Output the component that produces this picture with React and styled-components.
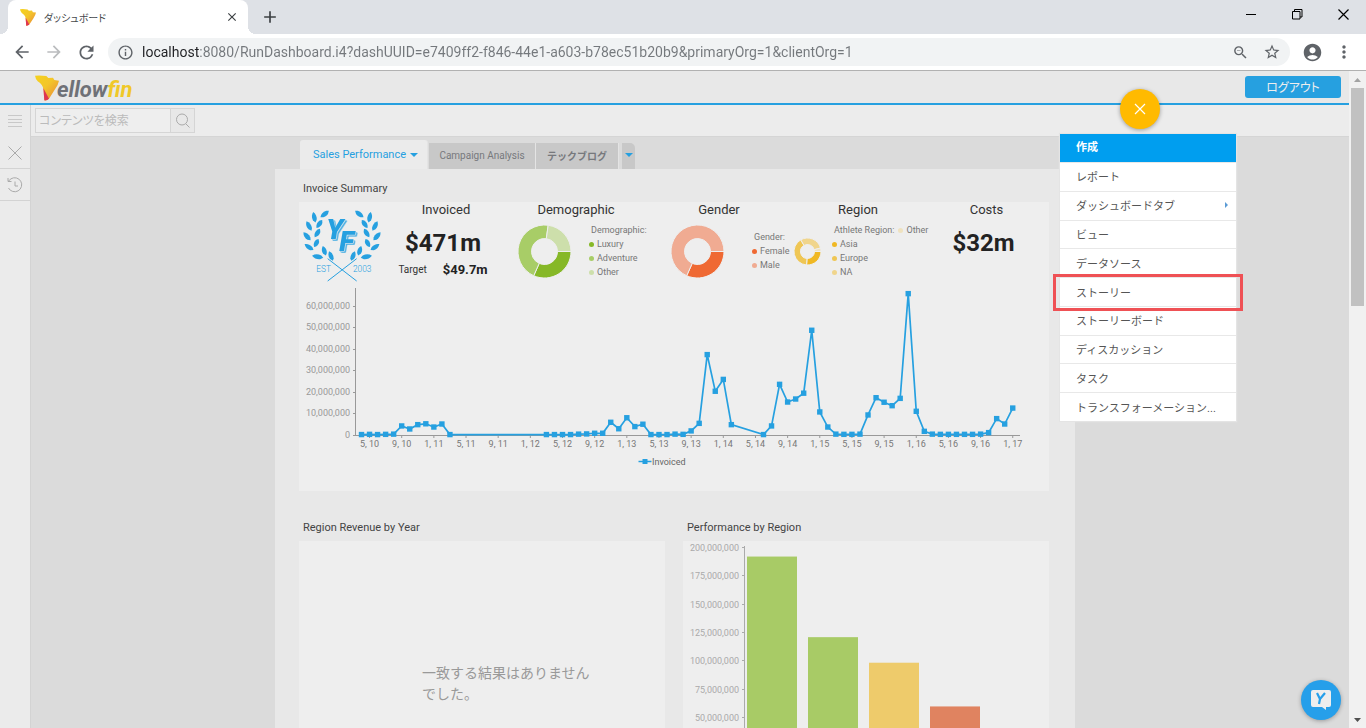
import React from "react";
import styled, { createGlobalStyle, css } from "styled-components";
import {
  MdArrowBack,
  MdArrowForward,
  MdRefresh,
  MdInfoOutline,
  MdZoomOut,
  MdStarBorder,
  MdAccountCircle,
  MdMoreVert,
  MdClose,
  MdAdd,
} from "react-icons/md";

const ui = '"Roboto", "Noto Sans CJK JP", sans-serif';
const blue = "#26a0e0";

const GlobalStyle = createGlobalStyle`
  * { box-sizing: border-box; }
  body { margin: 0; font-family: ${ui}; color: #444; overflow: hidden; }
  button { border: 0; padding: 0; background: none; font-family: inherit; color: inherit; cursor: pointer; }
  svg { display: block; flex: none; }
  ul { list-style: none; margin: 0; padding: 0; }
`;

/* ---------- browser frame ---------- */

const Browser = styled.div`
  display: flex;
  flex-direction: column;
  height: 100vh;
`;

const TabStrip = styled.div`
  display: flex;
  flex: none;
  height: 34px;
  padding-left: 8px;
  background: #dee1e6;
`;

const BrowserTab = styled.div`
  position: relative;
  display: flex;
  align-items: center;
  width: 240px;
  padding: 0 9px 0 12px;
  background: #fff;
  border-radius: 8px 8px 0 0;
  font-size: 10px;
  font-feature-settings: "palt";
  color: #45484c;

  &::before,
  &::after {
    content: "";
    position: absolute;
    bottom: 0;
    width: 8px;
    height: 8px;
  }
  &::before {
    left: -8px;
    background: radial-gradient(circle at 0 0, transparent 8px, #fff 8px);
  }
  &::after {
    right: -8px;
    background: radial-gradient(circle at 100% 0, transparent 8px, #fff 8px);
  }
`;

const TabTitle = styled.span`
  flex: 1;
  padding-left: 8px;
`;

const IconButton = styled.button`
  display: grid;
  place-items: center;
  flex: none;
  width: ${(p) => p.$w || 32}px;
  color: ${(p) => p.$color || "#5f6368"};
`;

const WindowControls = styled.div`
  display: flex;
  margin-left: auto;
  height: 28px;
`;

const AddressRow = styled.div`
  display: flex;
  align-items: center;
  flex: none;
  height: 37px;
  padding: 0 6px;
  background: #fff;
  border-bottom: 1px solid #b1b1b1;
`;

const AddressBar = styled.label`
  display: flex;
  align-items: center;
  flex: 1;
  height: 28px;
  margin: 0 6px;
  padding: 0 2px 0 9px;
  border-radius: 14px;
  background: #f1f3f4;
  color: #5f6368;
`;

const UrlInput = styled.input`
  flex: 1;
  min-width: 0;
  margin-left: 8px;
  padding: 0;
  border: 0;
  outline: 0;
  font: 14px/20px Roboto, sans-serif;
  color: transparent;
  background: linear-gradient(90deg, #202124 58px, #74787c 58px);
  background-clip: text;
  -webkit-background-clip: text;
`;

const Viewport = styled.div`
  display: flex;
  flex: 1;
  min-height: 0;
`;

const Scrollbar = styled.div`
  display: flex;
  flex-direction: column;
  align-items: center;
  flex: none;
  width: 17px;
  background: #f1f1f1;
`;

const ScrollArrow = styled(IconButton)`
  width: 17px;
  height: 17px;
`;

const ScrollThumb = styled.div`
  width: 13px;
  height: 33.2%;
  margin-bottom: auto;
  background: #c1c1c1;
`;

/* ---------- application ---------- */

const Page = styled.div`
  position: relative;
  display: flex;
  flex-direction: column;
  flex: 1;
  min-width: 0;
  overflow: hidden;
  background: #dbdbdb;
`;

const Header = styled.header`
  display: flex;
  align-items: center;
  justify-content: space-between;
  flex: none;
  height: 34px;
  padding: 0 8px 0 35px;
  background: #e8e8e8;
  border-bottom: 2px solid ${blue};
`;

const Brand = styled.a`
  display: flex;
  align-items: center;
  padding-top: 2px;
  font: italic 700 22px/26px Roboto, sans-serif;
  color: #6f7177;
  text-decoration: none;
`;

const BrandName = styled.span`
  margin-left: -2px;
  padding-top: 4px;
`;

const BrandFin = styled.span`
  color: #f0c828;
`;

const Logout = styled.button`
  width: 96px;
  height: 22px;
  padding-bottom: 2px;
  border-radius: 3px;
  background: ${blue};
  color: #eee;
  font-size: 12px;
  font-feature-settings: "palt";
`;

const Workspace = styled.div`
  display: flex;
  flex: 1;
  min-height: 0;
`;

const SideBar = styled.nav`
  display: flex;
  flex-direction: column;
  flex: none;
  width: 31px;
  background: #ebebeb;
  border-right: 1px solid #d3d3d3;
`;

const SideButton = styled.button`
  display: grid;
  place-items: center;
  height: 32px;
  border-bottom: 1px solid ${(p) => (p.$line ? "#d3d3d3" : "transparent")};
  color: #aaa;
`;

const Content = styled.div`
  flex: 1;
  min-width: 0;
`;

const SearchRow = styled.form`
  display: flex;
  height: 32px;
  padding: 3px 4px;
  background: #ececec;
  border-bottom: 1px solid #d5d5d5;
`;

const SearchInput = styled.input`
  width: 136px;
  height: 25px;
  padding: 0 3px;
  border: 1px solid #d5d5d5;
  background: #eee;
  font: 12px ${ui};
  font-feature-settings: "palt";
  outline: 0;
  &::placeholder {
    color: #bbb;
  }
`;

const SearchButton = styled.button`
  display: grid;
  place-items: center;
  width: 24px;
  height: 25px;
  border: 1px solid #d5d5d5;
  border-left: 0;
  background: #e8e8e8;
  color: #aaa;
`;

const Canvas = styled.main`
  padding: 2px 30px 0 0;
`;

const Dashboard = styled.div`
  max-width: 800px;
  margin: 0 auto;
`;

const DashTabs = styled.div`
  display: flex;
  align-items: flex-end;
  height: 30px;
  padding-left: 25px;
`;

const DashTab = styled.button`
  display: flex;
  align-items: center;
  justify-content: center;
  gap: 4px;
  width: ${(p) => p.$w}px;
  height: 26px;
  padding-bottom: 2px;
  background: #c8c8c8;
  border-right: 1px solid #e4e4e4;
  color: #77797d;
  font-size: 10px;
  font-weight: ${(p) => (p.$bold ? 700 : 400)};
  ${(p) =>
    p.$active &&
    css`
      height: 29px;
      margin-right: 1px;
      padding: 0 0 0 4px;
      background: #ebebeb;
      border-radius: 3px 3px 0 0;
      color: ${blue};
      font-size: 11px;
    `}
  ${(p) =>
    p.$more &&
    css`
      margin-left: 3px;
      border-right: 0;
      border-radius: 0 5px 0 0;
    `}
`;

const DashBody = styled.div`
  display: grid;
  grid-template-columns: 1fr 1fr;
  column-gap: 18px;
  row-gap: 23px;
  padding: 6px 26px 0 24px;
  background: #e8e8e8;
`;

const Report = styled.section`
  grid-column: ${(p) => (p.$wide ? "1 / -1" : "auto")};
  min-width: 0;
`;

const ReportTitle = styled.h2`
  margin: 0;
  padding: 0 4px;
  font-size: 11px;
  font-weight: 400;
  line-height: 27px;
  color: #444;
`;

const Panel = styled.div`
  min-height: ${(p) => p.$h}px;
  background: #eee;
`;

const KpiRow = styled.div`
  display: grid;
  grid-template-columns: 87fr 120fr 140fr 146fr 132fr 125fr;
  height: 80px;
`;

const Kpi = styled.div`
  min-width: 0;
  text-align: center;
`;

const LaurelBox = styled.div`
  padding: 5px 0 0 1px;
`;

const KpiTitle = styled.h3`
  margin: 0;
  font-size: 13px;
  font-weight: 400;
  line-height: 16px;
  color: #333;
`;

const BigValue = styled.div`
  padding: 8px 6px 0 0;
  font-size: 24px;
  font-weight: 700;
  line-height: 34px;
  color: #222;
`;

const TargetRow = styled.div`
  display: flex;
  justify-content: center;
  align-items: center;
  gap: 16px;
  padding-right: 6px;
  line-height: 20px;
  font-size: 10px;
  color: #333;
`;

const TargetValue = styled.strong`
  font-size: 13px;
  color: #222;
`;

const DonutRow = styled.div`
  display: flex;
  align-items: center;
  gap: ${(p) => p.$gap}px;
  height: 60px;
  padding: 6px 0 0 ${(p) => p.$pad}px;
  text-align: left;
`;

const Legend = styled.ul`
  font-size: 9px;
  line-height: 14px;
  white-space: nowrap;
  color: #777;
`;

const LegendTitle = styled.li`
  padding-left: 2px;
`;

const LegendItem = styled.li`
  display: flex;
  align-items: center;
  gap: 3px;
  padding-left: ${(p) => (p.$title ? 2 : 0)}px;
`;

const Dot = styled.span`
  width: 5px;
  height: 5px;
  margin-left: ${(p) => p.$space || 0}px;
  border-radius: 50%;
  background: ${(p) => p.$c};
`;

const Chart = styled.svg`
  width: 100%;
  font-family: Roboto, sans-serif;
  font-size: 9px;
`;

const NoResult = styled.p`
  margin: 0;
  padding: 122px 66px 0 123px;
  font-size: 14px;
  line-height: 21px;
  color: #999;
`;

/* ---------- floating create menu ---------- */

const CreateOverlay = styled.div`
  position: absolute;
  top: 18px;
  right: 113px;
  width: 176px;
`;

const CloseCircle = styled.button`
  display: grid;
  place-items: center;
  width: 40px;
  height: 40px;
  margin: 0 auto 5px 60px;
  border-radius: 50%;
  background: #ffba00;
  color: #fff;
  box-shadow: 0 1px 4px rgba(0, 0, 0, 0.35);
`;

const Menu = styled.div`
  background: #fff;
  box-shadow: 0 0 1px 1px #e4e4e4;
  font-size: 11px;
`;

const MenuTitle = styled.div`
  padding-left: 16px;
  background: #009eef;
  color: #fff;
  font-weight: 700;
  line-height: 28px;
`;

const MenuList = styled.ul`
  display: flex;
  flex-direction: column;
  height: 259px;
`;

const MenuItem = styled.li`
  position: relative;
  display: flex;
  flex: 1;
  border-top: 1px solid #e8e8e8;
  ${(p) =>
    p.$marked &&
    css`
      &::after {
        content: "";
        position: absolute;
        inset: -4px -7px -5px;
        border: 3px solid #ef5155;
        pointer-events: none;
        z-index: 1;
      }
    `}
`;

const MenuButton = styled.button`
  display: flex;
  align-items: center;
  justify-content: space-between;
  width: 100%;
  padding: 0 8px 1px 16px;
  font-size: 11px;
  color: #555;
`;

const ChatButton = styled.button`
  position: absolute;
  right: 8px;
  bottom: 8px;
  display: grid;
  place-items: center;
  width: 40px;
  height: 40px;
  border-radius: 50%;
  background: #269fea;
  box-shadow: 0 1px 4px rgba(0, 0, 0, 0.3);
`;

/* ---------- drawings ---------- */

function Emblem({ width, height }) {
  return (
    <svg width={width} height={height} viewBox="0 0 72 76" aria-hidden="true">
      <defs>
        <linearGradient id="gold" x1="0" y1="0" x2="1" y2="1">
          <stop offset="0" stopColor="#f5d21e" />
          <stop offset="0.45" stopColor="#f3c52a" />
          <stop offset="1" stopColor="#e8833a" />
        </linearGradient>
      </defs>
      <path
        d="M0 1 Q14 -1 34 2 L40 8 L54 7 L58 14 L72 16 Q70 28 60 42 L42 70 Q36 76 28 75 L26 44 Q24 28 8 18 Q2 12 0 1Z"
        fill="url(#gold)"
      />
      <path d="M25 38 L42 70 Q36 76 28 75Z" fill="#df3550" />
    </svg>
  );
}

function Caret({ size = 8, color = blue }) {
  return (
    <svg width={size} height={size / 2} viewBox="0 0 8 4">
      <path d="M0 0h8L4 4z" fill={color} />
    </svg>
  );
}

const LEAVES = [
  [104, 236, -38, 16],
  [73, 246, 78, 16],
  [88, 266, -55, 15],
  [57, 272, 62, 16],
  [82, 293, -58, 15],
  [51, 303, 48, 16],
  [79, 323, -62, 14],
  [57, 335, 34, 16],
  [83, 364, 10, 17],
  [103, 346, 72, 15],
  [123, 362, 68, 15],
];

function LeafSide() {
  return LEAVES.map(([x, y, r, len]) => (
    <path
      key={`${x}-${y}`}
      transform={`translate(${x} ${y}) rotate(${r})`}
      d={`M${-len} 0 Q${-len / 3} -10 ${len * 0.6} -5 L${len} 0 L${len * 0.5} 6 Q${-len / 3} 10 ${-len} 0Z`}
    />
  ));
}

const Monogram = styled.g`
  font: italic 900 84px Roboto, sans-serif;
  fill: ${blue};

  text {
    filter: drop-shadow(2px 2px 0 #eee) drop-shadow(3px 3px 0 ${blue});
  }
`;

function Laurel() {
  return (
    <svg width="85" height="77" viewBox="30 215 255 231" role="img" aria-label="YF Est 2003">
      <g fill={blue}>
        <LeafSide />
        <g transform="translate(312 0) scale(-1 1)">
          <LeafSide />
        </g>
      </g>
      <path d="M113 370 L200 437 M200 370 L113 437" stroke={blue} strokeWidth="3" />
      <Monogram>
        <text x="109" y="311">Y</text>
        <text x="148" y="346">F</text>
      </Monogram>
      <g fontFamily="Roboto, sans-serif" fontWeight="300" fontSize="25" fill={blue}>
        <text x="79" y="410">EST</text>
        <text x="189" y="410">2003</text>
      </g>
    </svg>
  );
}

/* Slices are [start, end, colour] in degrees, clockwise from three o'clock. */
function Donut({ size, hole, slices }) {
  const r = size / 2;
  const at = (deg, rad) => {
    const a = (deg * Math.PI) / 180;
    return `${r + rad * Math.cos(a)} ${r + rad * Math.sin(a)}`;
  };
  return (
    <svg width={size} height={size}>
      {slices.map(([a, b, c]) => {
        const big = b - a > 180 ? 1 : 0;
        return (
          <path
            key={a}
            d={`M${at(a, r)} A${r} ${r} 0 ${big} 1 ${at(b, r)} L${at(b, hole)} A${hole} ${hole} 0 ${big} 0 ${at(a, hole)}Z`}
            fill={c}
            stroke="#eee"
            strokeWidth="1"
          />
        );
      })}
    </svg>
  );
}

/* [month index counted from April 2010, invoiced in millions] */
const INVOICED = [
  [0, 0.2], [1, 0.3], [2, 0.2], [3, 0.3], [4, 0.4], [5, 4.2], [6, 2.8], [7, 4.8], [8, 5.2],
  [9, 3.7], [10, 5.1], [11, 0.2], [23, 0.2], [24, 0.2], [25, 0.2], [26, 0.2], [27, 0.4],
  [28, 0.5], [29, 0.8], [30, 0.8], [31, 5.9], [32, 2.9], [33, 8], [34, 3.9], [35, 5],
  [36, 0.2], [37, 0.2], [38, 0.2], [39, 0.4], [40, 0.3], [41, 1.9], [42, 5.4], [43, 37.3],
  [44, 20.3], [45, 25.8], [46, 4.8], [50, 0.2], [51, 4.2], [52, 23.5], [53, 15.3], [54, 16.7],
  [55, 19.4], [56, 48.6], [57, 10.7], [58, 3.7], [59, 0.4], [60, 0.3], [61, 0.3], [62, 0.4],
  [63, 9.3], [64, 17.3], [65, 15.2], [66, 13.6], [67, 17], [68, 65.6], [69, 11], [70, 1.7],
  [71, 0.4], [72, 0.3], [73, 0.3], [74, 0.3], [75, 0.3], [76, 0.3], [77, 0.4], [78, 1.1],
  [79, 7.6], [80, 5.1], [81, 12.5],
];

const MONTHS = [
  "5, 10", "9, 10", "1, 11", "5, 11", "9, 11", "1, 12", "5, 12", "9, 12", "1, 13", "5, 13", "9, 13",
  "1, 14", "5, 14", "9, 14", "1, 15", "5, 15", "9, 15", "1, 16", "5, 16", "9, 16", "1, 17",
];

function LineChart() {
  const x = (i) => 62.5 + i * 8.04;
  const y = (v) => 153 - v * 2.155;
  return (
    <Chart viewBox="0 0 750 208">
      <path d="M56.5 6V153.5H721" fill="none" stroke="#999" />
      {[0, 10, 20, 30, 40, 50, 60].map((v) => (
        <g key={v}>
          <path d={`M54 ${Math.round(y(v)) + 0.5}h3`} stroke="#999" />
          <text x="51" y={y(v) + 3} textAnchor="end" fill="#999">
            {v ? `${v},000,000` : "0"}
          </text>
        </g>
      ))}
      {MONTHS.map((m, k) => (
        <g key={m}>
          <path d={`M${x(1 + k * 4)} 153v3`} stroke="#999" />
          <text x={x(1 + k * 4)} y="165" textAnchor="middle" fill="#777">
            {m}
          </text>
        </g>
      ))}
      <polyline
        points={INVOICED.map(([i, v]) => `${x(i)},${y(v)}`).join(" ")}
        fill="none"
        stroke={blue}
        strokeWidth="1.7"
      />
      {INVOICED.map(([i, v]) => (
        <rect key={i} x={x(i) - 2.7} y={y(v) - 2.7} width="5.4" height="5.4" fill={blue} />
      ))}
      <path d="M339.5 179.5h13" stroke={blue} strokeWidth="1.5" />
      <rect x="343.5" y="177" width="5" height="5" fill={blue} />
      <text x="353" y="183" fill="#666">
        Invoiced
      </text>
    </Chart>
  );
}

const BARS = [
  [191.5, "#a8cb66"],
  [120.5, "#a8cb66"],
  [98, "#eecb6b"],
  [59.5, "#e08360"],
];

function BarChart() {
  const y = (v) => 233 - v * 1.1355;
  return (
    <Chart viewBox="0 0 366 250">
      {[200, 175, 150, 125, 100, 75, 50].map((v) => (
        <g key={v}>
          <path d={`M59 ${Math.round(y(v)) + 0.5}h3`} stroke="#aaa" />
          <text x="56" y={y(v) + 4} textAnchor="end" fill="#aaa">
            {v},000,000
          </text>
        </g>
      ))}
      <path d="M61.5 5V234" stroke="#aaa" />
      {BARS.map(([v, c], k) => (
        <rect key={v} x={64 + k * 61} y={y(v)} width="50" height={v * 1.1355} fill={c} />
      ))}
    </Chart>
  );
}

const MENU = [
  "レポート",
  "ダッシュボードタブ",
  "ビュー",
  "データソース",
  "ストーリー",
  "ストーリーボード",
  "ディスカッション",
  "タスク",
  "トランスフォーメーション...",
];

export default function App() {
  return (
    <Browser>
      <GlobalStyle />
      <TabStrip>
        <BrowserTab>
          <Emblem width={16} height={17} />
          <TabTitle>ダッシュボード</TabTitle>
          <IconButton $w={14} $color="#3c4043" aria-label="Close tab">
            <MdClose size={14} />
          </IconButton>
        </BrowserTab>
        <IconButton $w={44} $color="#3c4043" aria-label="New tab">
          <MdAdd size={20} />
        </IconButton>
        <WindowControls>
          <IconButton $w={46} $color="#000" aria-label="Minimize">
            <svg width="10" height="10"><path d="M0 5.5h10" stroke="currentColor" /></svg>
          </IconButton>
          <IconButton $w={46} $color="#000" aria-label="Restore">
            <svg width="11" height="11" fill="none" stroke="currentColor">
              <path d="M.5 2.5h7.5v7.5H.5z M2.5 2.5V.5H10V8H8" />
            </svg>
          </IconButton>
          <IconButton $w={46} $color="#000" aria-label="Close window">
            <svg width="11" height="11"><path d="M.5 .5l10 10M10.5 .5l-10 10" stroke="currentColor" strokeWidth="1.2" /></svg>
          </IconButton>
        </WindowControls>
      </TabStrip>
      <AddressRow>
        <IconButton aria-label="Back"><MdArrowBack size={20} /></IconButton>
        <IconButton $color="#babcbe" aria-label="Forward"><MdArrowForward size={20} /></IconButton>
        <IconButton aria-label="Reload"><MdRefresh size={21} /></IconButton>
        <AddressBar>
          <MdInfoOutline size={17} />
          <UrlInput
            aria-label="Address"
            defaultValue="localhost:8080/RunDashboard.i4?dashUUID=e7409ff2-f846-44e1-a603-b78ec51b20b9&primaryOrg=1&clientOrg=1"
          />
          <IconButton aria-label="Zoom"><MdZoomOut size={17} /></IconButton>
          <IconButton aria-label="Bookmark"><MdStarBorder size={18} /></IconButton>
        </AddressBar>
        <IconButton aria-label="Profile"><MdAccountCircle size={21} /></IconButton>
        <IconButton aria-label="Browser menu"><MdMoreVert size={20} /></IconButton>
      </AddressRow>
      <Viewport>
        <Page>
          <Header>
            <Brand href="#">
              <Emblem width={24} height={26} />
              <BrandName>ellow<BrandFin>fin</BrandFin></BrandName>
            </Brand>
            <Logout>ログアウト</Logout>
          </Header>
          <Workspace>
            <SideBar>
              <SideButton aria-label="Menu">
                <svg width="14" height="12"><path d="M0 .5h14M0 4.5h14M0 7.5h14M0 11.5h14" stroke="#c8c8c8" /></svg>
              </SideButton>
              <SideButton $line aria-label="Close">
                <svg width="14" height="14"><path d="M.5 .5l13 13M13.5 .5l-13 13" stroke="currentColor" /></svg>
              </SideButton>
              <SideButton $line aria-label="History">
                <svg width="16" height="16" fill="none" stroke="currentColor">
                  <path d="M4 1.8A7 7 0 1 1 1.5 11M1 1v3.5h3.5M8 4.5V9h3M1 4.5L4 1.8" />
                </svg>
              </SideButton>
            </SideBar>
            <Content>
              <SearchRow>
                <SearchInput placeholder="コンテンツを検索" aria-label="コンテンツを検索" />
                <SearchButton type="button" aria-label="Search">
                  <svg width="14" height="15" fill="none" stroke="currentColor">
                    <circle cx="6" cy="6.5" r="5.5" />
                    <path d="M10 11l3.5 3.5" />
                  </svg>
                </SearchButton>
              </SearchRow>
              <Canvas>
                <Dashboard>
                  <DashTabs>
                    <DashTab $w={128} $active>Sales Performance <Caret /></DashTab>
                    <DashTab $w={107}>Campaign Analysis</DashTab>
                    <DashTab $w={83} $bold>テックブログ</DashTab>
                    <DashTab $w={13} $more aria-label="More tabs"><Caret /></DashTab>
                  </DashTabs>
                  <DashBody>
                    <Report $wide>
                      <ReportTitle>Invoice Summary</ReportTitle>
                      <Panel $h={289}>
                        <KpiRow>
                          <LaurelBox><Laurel /></LaurelBox>
                          <Kpi>
                            <KpiTitle>Invoiced</KpiTitle>
                            <BigValue>$471m</BigValue>
                            <TargetRow>Target <TargetValue>$49.7m</TargetValue></TargetRow>
                          </Kpi>
                          <Kpi>
                            <KpiTitle>Demographic</KpiTitle>
                            <DonutRow $pad={12} $gap={18}>
                              <Donut
                                size={53}
                                hole={13}
                                slices={[[0, 114, "#86b827"], [114, 278, "#a8cd67"], [278, 360, "#cddfab"]]}
                              />
                              <Legend>
                                <LegendTitle>Demographic:</LegendTitle>
                                <LegendItem><Dot $c="#86b827" />Luxury</LegendItem>
                                <LegendItem><Dot $c="#a8cd67" />Adventure</LegendItem>
                                <LegendItem><Dot $c="#cddfab" />Other</LegendItem>
                              </Legend>
                            </DonutRow>
                          </Kpi>
                          <Kpi>
                            <KpiTitle>Gender</KpiTitle>
                            <DonutRow $pad={25} $gap={28}>
                              <Donut size={53} hole={13} slices={[[0, 114, "#ef6933"], [114, 360, "#f0ab92"]]} />
                              <Legend>
                                <LegendTitle>Gender:</LegendTitle>
                                <LegendItem><Dot $c="#ef6933" />Female</LegendItem>
                                <LegendItem><Dot $c="#f0ab92" />Male</LegendItem>
                              </Legend>
                            </DonutRow>
                          </Kpi>
                          <Kpi>
                            <KpiTitle>Region</KpiTitle>
                            <DonutRow $pad={2} $gap={11}>
                              <Donut
                                size={27}
                                hole={7}
                                slices={[
                                  [0, 94, "#f0b823"],
                                  [94, 240, "#efc654"],
                                  [240, 345, "#f0d58c"],
                                  [345, 360, "#efe2bf"],
                                ]}
                              />
                              <Legend>
                                <LegendItem $title>Athlete Region: <Dot $c="#efe2bf" $space={1} />Other</LegendItem>
                                <LegendItem><Dot $c="#f0b823" />Asia</LegendItem>
                                <LegendItem><Dot $c="#efc654" />Europe</LegendItem>
                                <LegendItem><Dot $c="#f0d58c" />NA</LegendItem>
                              </Legend>
                            </DonutRow>
                          </Kpi>
                          <Kpi>
                            <KpiTitle>Costs</KpiTitle>
                            <BigValue>$32m</BigValue>
                          </Kpi>
                        </KpiRow>
                        <LineChart />
                      </Panel>
                    </Report>
                    <Report>
                      <ReportTitle>Region Revenue by Year</ReportTitle>
                      <Panel $h={250}>
                        <NoResult>一致する結果はありませんでした。</NoResult>
                      </Panel>
                    </Report>
                    <Report>
                      <ReportTitle>Performance by Region</ReportTitle>
                      <Panel $h={250}><BarChart /></Panel>
                    </Report>
                  </DashBody>
                </Dashboard>
              </Canvas>
            </Content>
          </Workspace>
          <CreateOverlay>
            <CloseCircle aria-label="Close menu">
              <svg width="12" height="12"><path d="M1 1l10 10M11 1L1 11" stroke="currentColor" strokeWidth="1.2" /></svg>
            </CloseCircle>
            <Menu>
              <MenuTitle>作成</MenuTitle>
              <MenuList>
                {MENU.map((label, i) => (
                  <MenuItem key={label} $marked={i === 4}>
                    <MenuButton>
                      {label}
                      {i === 1 && (
                        <svg width="3" height="6"><path d="M0 0v6l3-3z" fill="#5b9bd5" /></svg>
                      )}
                    </MenuButton>
                  </MenuItem>
                ))}
              </MenuList>
            </Menu>
          </CreateOverlay>
          <ChatButton aria-label="Chat">
            <svg width="20" height="20" viewBox="0 0 20 20">
              <path d="M2 0h16q2 0 2 2v13q0 2-2 2h-3v3l-4-3H2q-2 0-2-2V2q0-2 2-2z" fill="#eee" />
              <path d="M6 3l3 6 5-6M9 9l-1 5" fill="none" stroke="#269fea" strokeWidth="2.2" />
            </svg>
          </ChatButton>
        </Page>
        <Scrollbar>
          <ScrollArrow aria-label="Scroll up">
            <svg width="7" height="4"><path d="M0 4h7L3.5 0z" fill="#a3a3a3" /></svg>
          </ScrollArrow>
          <ScrollThumb />
          <ScrollArrow aria-label="Scroll down">
            <svg width="7" height="4"><path d="M0 0h7L3.5 4z" fill="#505050" /></svg>
          </ScrollArrow>
        </Scrollbar>
      </Viewport>
    </Browser>
  );
}
